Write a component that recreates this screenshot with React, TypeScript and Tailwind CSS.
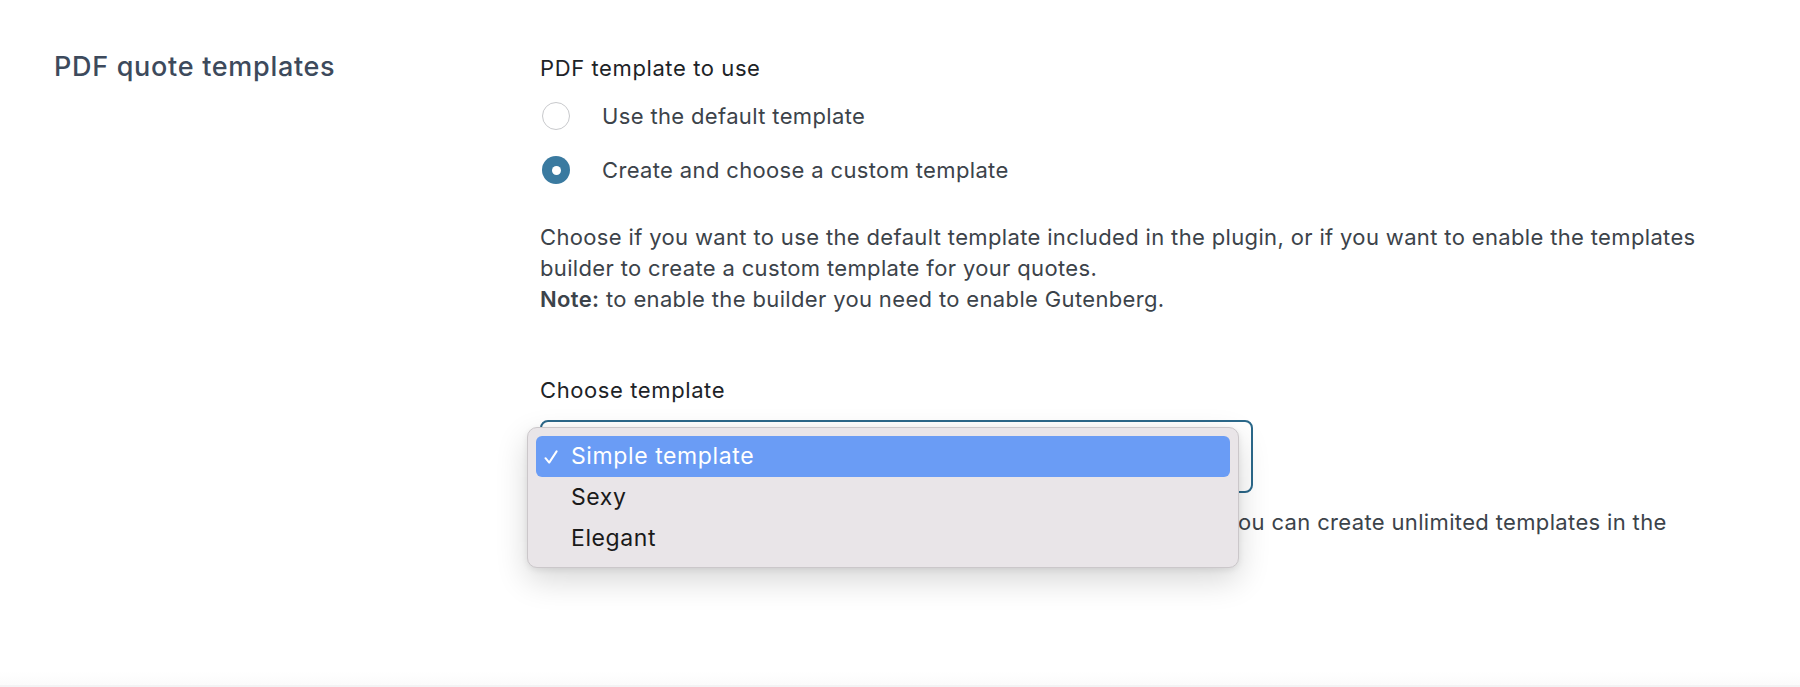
import React from "react";

export default function App() {
  return (
    <div
      className="w-full h-[687px] bg-white flex flex-col overflow-hidden"
      style={{ fontFamily: "Inter, 'Noto Sans', sans-serif" }}
    >
      <div className="flex flex-1">
        <div className="w-[540px] shrink-0 pl-[54px] pt-[51px]">
          <h2 className="text-[27px] leading-[32px] font-medium text-[#3d4a5c] tracking-[0.7px]">
            PDF quote templates
          </h2>
        </div>
        <div className="flex-1 pt-[54px] pr-[60px]">
          <div className="text-[22px] leading-[28px] text-[#1d2327] tracking-[0.6px]">PDF template to use</div>

          <div className="mt-[14px] flex flex-col gap-[14px]">
            <label className="flex items-center h-[40px]">
              <span className="ml-[2px] w-[28px] h-[28px] rounded-full border-[1.5px] border-[#c8c9cc] bg-white" />
              <span className="ml-[32px] text-[22px] leading-[40px] text-[#3c434a] tracking-[0.35px]">
                Use the default template
              </span>
            </label>
            <label className="flex items-center h-[40px]">
              <span className="ml-[2px] w-[28px] h-[28px] rounded-full bg-[#3a7aa0] flex items-center justify-center">
                <span className="w-[9px] h-[9px] rounded-full bg-white" />
              </span>
              <span className="ml-[32px] text-[22px] leading-[40px] text-[#3c434a] tracking-[0.35px]">
                Create and choose a custom template
              </span>
            </label>
          </div>

          <p className="mt-[32px] text-[22px] leading-[31px] text-[#3c434a] tracking-[0.35px] max-w-[1190px]">
            Choose if you want to use the default template included in the plugin, or if you want to enable the templates
            builder to create a custom template for your quotes.
            <br />
            <strong className="font-semibold">Note:</strong> to enable the builder you need to enable Gutenberg.
          </p>

          <div className="mt-[61px] text-[22px] leading-[28px] text-[#1d2327] tracking-[0.6px]">Choose template</div>

          <div className="relative mt-[16px] w-[713px]">
            <div className="h-[73px] rounded-[8px] border-[2.5px] border-[#2b688a] bg-white" />

            <div className="absolute left-[-13px] top-[7px] w-[712px] rounded-[10px] border border-[#cbc7ca] bg-[#e9e5e8] p-[8px] shadow-[0_12px_32px_rgba(0,0,0,0.16),0_2px_6px_rgba(0,0,0,0.08)] z-10">
              <div className="h-[41px] rounded-[6px] bg-[#6a9cf5] flex items-center text-white text-[23px] tracking-[0.6px]">
                <span className="w-[35px] pl-[8px] flex items-center">
                  <svg width="14" height="14" viewBox="0 0 14 14" fill="none">
                    <path d="M1.5 8.2 L5.2 12.6 L12.6 1.4" stroke="white" strokeWidth="2" strokeLinecap="round" strokeLinejoin="round" />
                  </svg>
                </span>
                <span>Simple template</span>
              </div>
              <div className="h-[41px] flex items-center text-[#1a1a1a] text-[23px] tracking-[0.6px]">
                <span className="w-[35px]" />
                <span>Sexy</span>
              </div>
              <div className="h-[41px] flex items-center text-[#1a1a1a] text-[23px] tracking-[0.6px]">
                <span className="w-[35px]" />
                <span>Elegant</span>
              </div>
            </div>
          </div>

          <p className="mt-[14px] text-[22px] leading-[31px] text-[#3c434a] tracking-[0.35px] whitespace-nowrap">
            <span className="inline-block w-[698px] text-right align-top">
              Select a template for your quotes. In the builder, y
            </span>
            ou can create unlimited templates in the
          </p>
        </div>
      </div>
      <div className="h-[14px] bg-gradient-to-b from-white to-[#fbfbfb]" />
      <div className="h-[2px] bg-[#f3f3f4]" />
    </div>
  );
}
